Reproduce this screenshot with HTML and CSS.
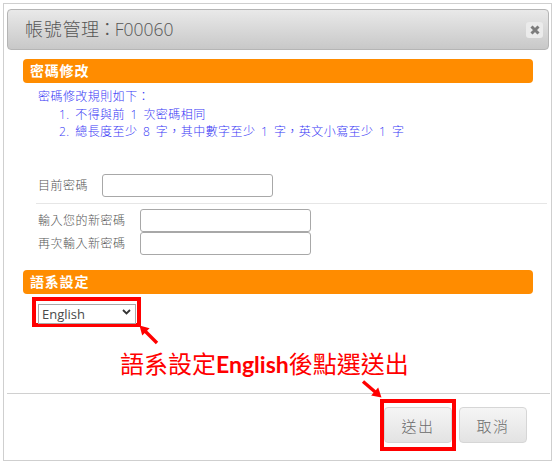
FILE: index.html
```html
<!DOCTYPE html>
<html lang="zh-Hant">
<head>
<meta charset="utf-8">
<title>帳號管理</title>
<link rel="stylesheet" href="styles.css">
</head>
<body>
<div class="modal">
  <div class="modal-header">
    <h1 class="modal-title">帳號管理<span class="colon">：</span><span class="code">F00060</span></h1>
    <button class="close" type="button" aria-label="close">
      <svg width="10" height="10" viewBox="0 0 10 10"><path d="M1.5 1.5 L8.5 8.5 M8.5 1.5 L1.5 8.5" stroke="#7c7c7c" stroke-width="3" stroke-linecap="butt"/></svg>
    </button>
  </div>
  <div class="modal-body">
    <div class="section-bar">密碼修改</div>
    <div class="rules">
      <p>密碼修改規則如下：</p>
      <p class="rule">1. 不得與前 1 次密碼相同</p>
      <p class="rule">2. 總長度至少 8 字，其中數字至少 1 字，英文小寫至少 1 字</p>
    </div>
    <div class="form-row row-current"><label>目前密碼</label><input type="password"></div>
    <hr class="form-sep">
    <div class="form-row"><label>輸入您的新密碼</label><input type="password"></div>
    <div class="form-row"><label>再次輸入新密碼</label><input type="password"></div>
    <div class="section-bar bar-lang">語系設定</div>
    <div class="lang-row">
      <div class="highlight hl-select">
        <div class="select-wrap">
          <select><option>English</option><option>繁體中文</option></select>
          <svg class="chevron" width="9" height="6" viewBox="0 0 9 6"><path d="M1 1 L4.5 4.5 L8 1" fill="none" stroke="#333" stroke-width="1.8"/></svg>
        </div>
      </div>
    </div>
    <p class="annotation">語系設定<b>English</b>後點選送出</p>
  </div>
  <div class="modal-footer">
    <div class="highlight hl-btn"><button class="btn" type="button">送出</button></div>
    <button class="btn" type="button">取消</button>
  </div>
</div>
<svg class="arrows" width="556" height="466" viewBox="0 0 556 466">
  <line x1="157" y1="343" x2="145" y2="331" stroke="#ff0000" stroke-width="3.4"/>
  <polygon points="139.5,325.5 149.6,328.2 142.2,335.6" fill="#ff0000"/>
  <line x1="363" y1="381.5" x2="375.5" y2="392.3" stroke="#ff0000" stroke-width="3.4"/>
  <polygon points="381.5,397.5 371.2,395.6 378.2,387.6" fill="#ff0000"/>
</svg>
</body>
</html>
```
FILE: styles.css
```css
html, body {
  margin: 0;
  padding: 0;
}
body {
  position: relative;
  width: 556px;
  height: 466px;
  overflow: hidden;
  background: #fff;
  font-family: "Open Sans", "Noto Sans CJK TC", sans-serif;
}
.modal {
  box-sizing: border-box;
  width: 549px;
  height: 458px;
  margin: 3px 0 0 3px;
  border: 1px solid #cfcfcf;
  display: flex;
  flex-direction: column;
}
.modal-header {
  box-sizing: border-box;
  height: 41px;
  margin: 5px 2px 0 3px;
  border: 1px solid #b5b5b5;
  border-radius: 4px;
  background: linear-gradient(#e9e9e9, #c8c8c8);
  display: flex;
  align-items: center;
  justify-content: space-between;
  padding: 0 5px 0 17px;
}
.modal-title {
  margin: 0;
  font-size: 18px;
  font-weight: 300;
  line-height: 1;
  color: #555;
  letter-spacing: 0.7px;
}
.modal-title .colon {
  font-feature-settings: "palt";
  letter-spacing: 0;
  padding: 0 3px 0 3px;
}
.modal-title .code {
  font-size: 17.5px;
  letter-spacing: 0;
}
.close {
  width: 17px;
  height: 16px;
  padding: 0;
  border: 0;
  border-radius: 3px;
  background: #ebebeb;
  display: grid;
  place-items: center;
}
.close svg { display: block; }
.modal-body {
  padding: 9px 18px 0 19px;
  display: flex;
  flex-direction: column;
}
.section-bar {
  height: 24px;
  line-height: 24px;
  background: #ff8c00;
  border-radius: 4px;
  color: #fff;
  font-weight: 700;
  font-size: 14px;
  padding-left: 7px;
  letter-spacing: 0.8px;
}
.rules {
  margin-top: 5px;
  padding-left: 15px;
  color: #3838f5;
  font-size: 12px;
  font-weight: 300;
  line-height: 17.5px;
  letter-spacing: 0.45px;
  word-spacing: 2px;
}
.rules p { margin: 0; }
.rules .rule { padding-left: 21px; }
.form-row {
  display: flex;
  align-items: center;
  gap: 14px;
  padding-left: 15px;
  height: 23px;
  font-size: 12px;
  font-weight: 300;
  color: #555;
  letter-spacing: 0.5px;
}
.row-current { margin-top: 33px; }
.form-row input {
  box-sizing: border-box;
  width: 171px;
  height: 23px;
  margin: 0;
  padding: 0 4px;
  border: 1px solid #a8a8a8;
  border-radius: 3px;
  background: #fff;
}
.form-sep {
  height: 0;
  margin: 6px -14px 5px 13px;
  border: 0;
  border-top: 1px solid #e6e6e6;
}
.bar-lang { margin-top: 15px; }
.lang-row {
  margin-top: 3px;
  padding-left: 9px;
  display: flex;
}
.highlight {
  display: inline-flex;
  border: 4px solid #ff0000;
}
.hl-select { padding: 1px 1px 1px 2px; }
.select-wrap {
  position: relative;
  width: 98px;
  height: 20px;
}
.select-wrap select {
  -webkit-appearance: none;
  appearance: none;
  box-sizing: border-box;
  width: 100%;
  height: 100%;
  margin: 0;
  padding: 0 0 0 3px;
  border: 1px solid #a9a9a9;
  border-radius: 0;
  background: #fff;
  color: #4a4a4a;
  font-family: "Open Sans", "Noto Sans CJK TC", sans-serif;
  font-size: 13px;
  line-height: 18px;
}
.chevron {
  position: absolute;
  right: 5px;
  top: 7px;
}
.annotation {
  margin: 24px 0 0;
  padding-left: 97px;
  font-family: "Noto Sans CJK TC", sans-serif;
  font-size: 24px;
  line-height: 24px;
  color: #ff0000;
}
.annotation b {
  font-family: Lato, "Open Sans", sans-serif;
  font-weight: 700;
  font-size: 23px;
}
.modal-footer {
  margin: auto 1px 0 3px;
  border-top: 1px solid #d0d0d0;
  padding: 5px 23px 9px 0;
  display: flex;
  justify-content: flex-end;
  align-items: center;
  gap: 3px;
}
.hl-btn { padding: 4px 0; }
.btn {
  box-sizing: border-box;
  width: 68px;
  height: 36px;
  margin: 0;
  padding: 0;
  border: 1px solid #d6d6d6;
  border-radius: 4px;
  background: linear-gradient(#f5f5f5, #e3e3e3);
  color: #6a6a6a;
  font-family: "Open Sans", "Noto Sans CJK TC", sans-serif;
  font-size: 15px;
  font-weight: 300;
  letter-spacing: 1.5px;
}
.arrows {
  position: absolute;
  left: 0;
  top: 0;
  pointer-events: none;
}
```
